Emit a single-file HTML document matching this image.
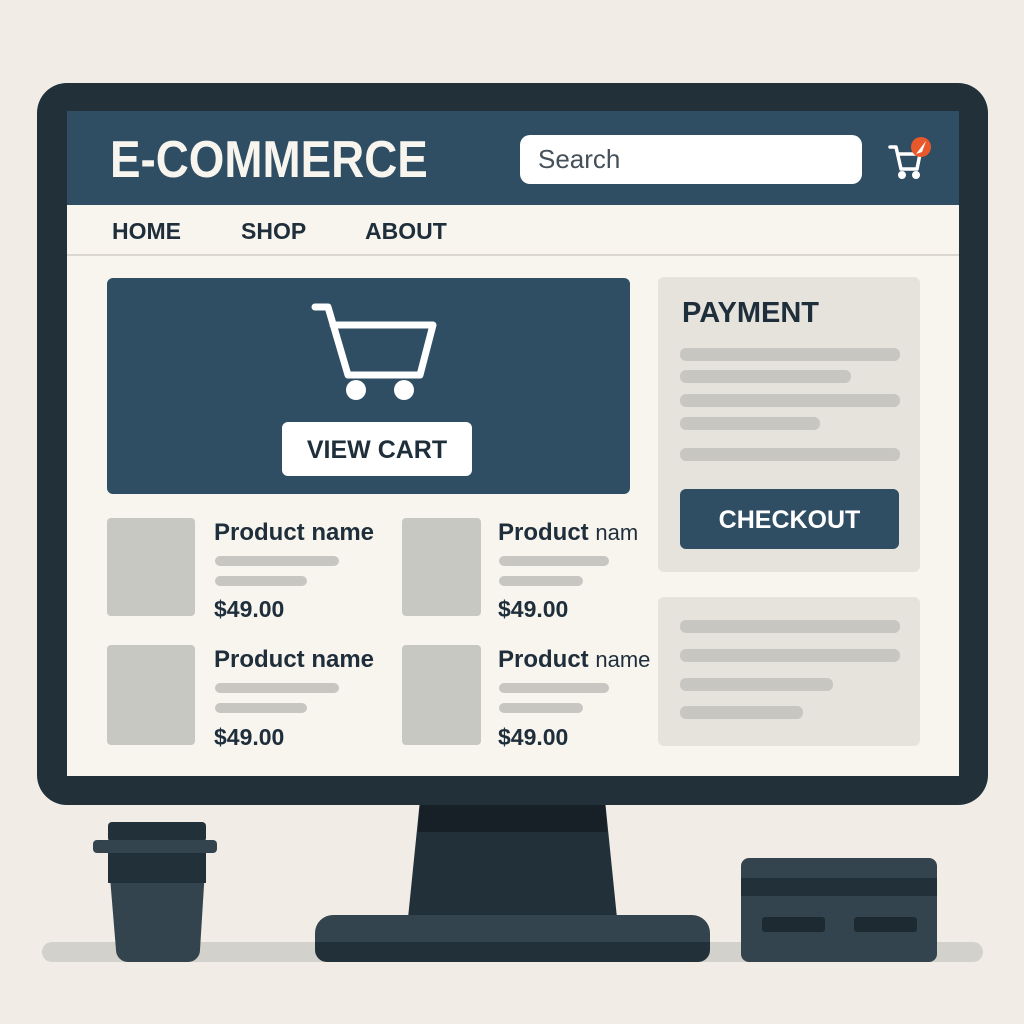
<!DOCTYPE html><html><head><style>
*{margin:0;padding:0;box-sizing:border-box}
body{width:1024px;height:1024px;background:#f1ede6;position:relative;overflow:hidden;font-family:"Liberation Sans",sans-serif;color:#1f2e3b}
.a{position:absolute}
.ln{position:absolute;background:#c7c6c1;border-radius:6px}
.t{position:absolute;font-weight:bold;white-space:nowrap}
</style></head><body>
<div class="a" style="left:42px;top:942px;width:941px;height:20px;background:#d2d1cb;border-radius:10px"></div>
<svg class="a" style="left:0;top:0" width="1024" height="1024">
<polygon points="420,800 605,800 617,918 408,918" fill="#22303a"/>
<polygon points="420,800 605,800 607,832 418,832" fill="#172026"/>
<rect x="315" y="915" width="395" height="47" rx="18" fill="#34444e"/>
<path d="M315 942 H710 V950 a12 12 0 0 1 -12 12 H327 a12 12 0 0 1 -12 -12 Z" fill="#22303a"/>
<path d="M108 853 H206 L200 950 a12 12 0 0 1 -12 12 H128 a12 12 0 0 1 -12 -12 Z" fill="#34444e"/>
<rect x="108" y="853" width="98" height="30" fill="#22303a"/>
<rect x="108" y="822" width="98" height="20" rx="4" fill="#22303a"/>
<rect x="93" y="840" width="124" height="13" rx="4" fill="#34444e"/>
<rect x="741" y="858" width="196" height="104" rx="8" fill="#34444e"/>
<rect x="741" y="878" width="196" height="18" fill="#22303a"/>
<rect x="762" y="917" width="63" height="15" rx="3" fill="#1d2a32"/>
<rect x="854" y="917" width="63" height="15" rx="3" fill="#1d2a32"/>
</svg>
<div class="a" style="left:37px;top:83px;width:951px;height:722px;background:#22303a;border-radius:30px"></div>
<div class="a" style="left:67px;top:111px;width:892px;height:665px;background:#f8f5ef"></div>
<div class="a" style="left:67px;top:111px;width:892px;height:94px;background:#2f4d63"></div>
<div class="t" style="left:110px;top:130px;font-size:52px;color:#f8f5ef;transform:scaleX(0.88);transform-origin:0 0">E-COMMERCE</div>
<div class="a" style="left:520px;top:135px;width:342px;height:49px;background:#fff;border-radius:10px;font-size:26px;color:#45505a;padding:9px 0 0 18px">Search</div>
<svg class="a" style="left:885px;top:133px" width="50" height="50">
<path d="M5 14 H11 L16 36 H32 L35 21 H14" fill="none" stroke="#fff" stroke-width="3.5" stroke-linejoin="round" stroke-linecap="round"/>
<circle cx="17" cy="42" r="4" fill="#fff"/><circle cx="31" cy="42" r="4" fill="#fff"/>
<circle cx="36" cy="14" r="10" fill="#e8582a"/>
<path d="M31 21 L41 8 L37 19 Z" fill="#fff"/>
</svg>
<div class="a" style="left:67px;top:254px;width:892px;height:2px;background:#dcd8d0"></div>
<div class="t" style="left:112px;top:218px;font-size:23px">HOME</div>
<div class="t" style="left:241px;top:218px;font-size:23px">SHOP</div>
<div class="t" style="left:365px;top:218px;font-size:23px">ABOUT</div>
<div class="a" style="left:107px;top:278px;width:523px;height:216px;background:#2f4d63;border-radius:6px"></div>
<svg class="a" style="left:300px;top:295px" width="150" height="115">
<path d="M15 12 H28 L48 80 H120 L133 30 H33" fill="none" stroke="#fff" stroke-width="7" stroke-linejoin="round" stroke-linecap="round"/>
<circle cx="56" cy="95" r="10" fill="#fff"/><circle cx="104" cy="95" r="10" fill="#fff"/>
</svg>
<div class="t" style="left:282px;top:422px;width:190px;height:54px;background:#fff;border-radius:6px;font-size:25px;text-align:center;line-height:56px">VIEW CART</div>
<div class="a" style="left:658px;top:277px;width:262px;height:295px;background:#e6e3dc;border-radius:6px"></div>
<div class="t" style="left:682px;top:297px;font-size:29px">PAYMENT</div>
<div class="ln" style="left:680px;top:348px;width:220px;height:13px"></div>
<div class="ln" style="left:680px;top:370px;width:171px;height:13px"></div>
<div class="ln" style="left:680px;top:394px;width:220px;height:13px"></div>
<div class="ln" style="left:680px;top:417px;width:140px;height:13px"></div>
<div class="ln" style="left:680px;top:448px;width:220px;height:13px"></div>
<div class="t" style="left:680px;top:489px;width:219px;height:60px;background:#2f4d63;border-radius:6px;color:#fff;font-size:25px;text-align:center;line-height:62px">CHECKOUT</div>
<div class="a" style="left:658px;top:597px;width:262px;height:149px;background:#e6e3dc;border-radius:6px"></div>
<div class="ln" style="left:680px;top:620px;width:220px;height:13px"></div>
<div class="ln" style="left:680px;top:649px;width:220px;height:13px"></div>
<div class="ln" style="left:680px;top:678px;width:153px;height:13px"></div>
<div class="ln" style="left:680px;top:706px;width:123px;height:13px"></div>
<div class="a" style="left:107px;top:518px;width:88px;height:98px;background:#c8c8c3;border-radius:4px"></div>
<div class="a" style="left:402px;top:518px;width:79px;height:98px;background:#c8c8c3;border-radius:4px"></div>
<div class="a" style="left:107px;top:645px;width:88px;height:100px;background:#c8c8c3;border-radius:4px"></div>
<div class="a" style="left:402px;top:645px;width:79px;height:100px;background:#c8c8c3;border-radius:4px"></div>
<div class="t" style="left:214px;top:519px;font-size:24px">Product name</div>
<div class="t" style="left:498px;top:519px;font-size:24px">Product <span style="font-weight:normal;font-size:22px">nam</span></div>
<div class="t" style="left:214px;top:646px;font-size:24px">Product name</div>
<div class="t" style="left:498px;top:646px;font-size:24px">Product <span style="font-weight:normal;font-size:22px">name</span></div>
<div class="ln" style="left:215px;top:556px;width:124px;height:10px"></div>
<div class="ln" style="left:215px;top:576px;width:92px;height:10px"></div>
<div class="ln" style="left:499px;top:556px;width:110px;height:10px"></div>
<div class="ln" style="left:499px;top:576px;width:84px;height:10px"></div>
<div class="ln" style="left:215px;top:683px;width:124px;height:10px"></div>
<div class="ln" style="left:215px;top:703px;width:92px;height:10px"></div>
<div class="ln" style="left:499px;top:683px;width:110px;height:10px"></div>
<div class="ln" style="left:499px;top:703px;width:84px;height:10px"></div>
<div class="t" style="left:214px;top:596px;font-size:23px">$49.00</div>
<div class="t" style="left:498px;top:596px;font-size:23px">$49.00</div>
<div class="t" style="left:214px;top:724px;font-size:23px">$49.00</div>
<div class="t" style="left:498px;top:724px;font-size:23px">$49.00</div>
</body></html>
